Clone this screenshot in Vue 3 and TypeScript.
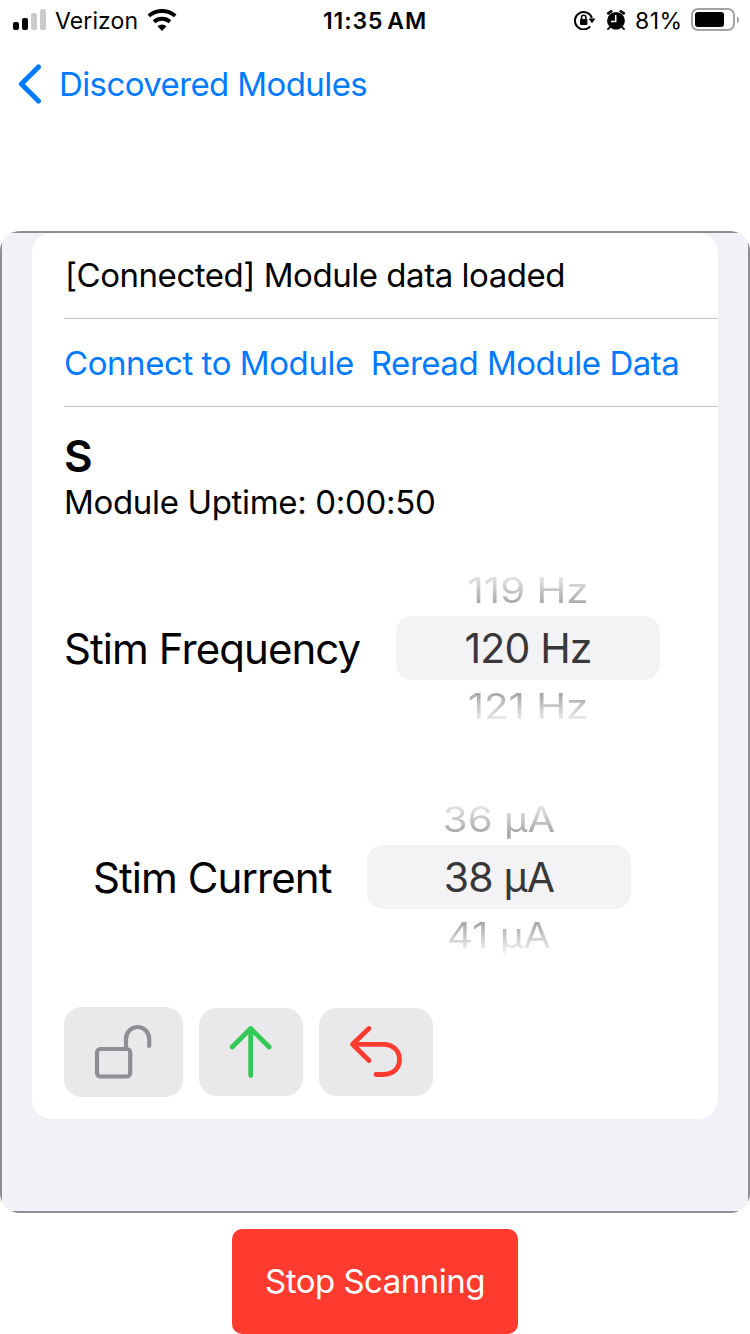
<script setup lang="ts">
interface Wheel {
  id: string
  label: string
  before: string
  value: string
  after: string
}

const wheels: Wheel[] = [
  { id: 'frequency', label: 'Stim Frequency', before: '119 Hz', value: '120 Hz', after: '121 Hz' },
  { id: 'current', label: 'Stim Current', before: '36 µA', value: '38 µA', after: '41 µA' },
]
</script>

<template>
  <div class="screen">
    <header class="status">
      <div class="side left">
        <svg class="signal" width="34" height="22" viewBox="0 0 34 22">
          <rect x="0" y="13" width="6" height="8" rx="2" />
          <rect x="9" y="9" width="6" height="12" rx="2" />
          <rect x="18" y="4" width="6" height="17" rx="2" fill="#cbcbcb" />
          <rect x="27" y="0" width="6" height="21" rx="2" fill="#cbcbcb" />
        </svg>
        <span class="carrier">Verizon</span>
        <svg class="wifi" width="30" height="22" viewBox="0 0 30 22">
          <path d="M1.800 6.900A20 20 0 0 1 28.200 6.900M7 12.800A12.200 12.200 0 0 1 23 12.800" fill="none" stroke="#000" stroke-width="3.900" />
          <path d="M15 22l-4.500-4.700a6.300 6.300 0 0 1 9 0z" />
        </svg>
      </div>
      <span class="time">11:35<i class="thin"></i>AM</span>
      <div class="side right">
        <svg class="rotation" width="22" height="20" viewBox="0 0 22 20">
          <path d="M16.200 16.400A8.700 8.700 0 1 1 17.900 8" fill="none" stroke="#000" stroke-width="2" />
          <path d="M14.500 8.400h7L18 13.200z" />
          <rect x="6" y="9" width="7.400" height="6" rx="1" />
          <path d="M7.500 9.500V7.400a2.200 2.200 0 0 1 4.400 0v2.100" fill="none" stroke="#000" stroke-width="1.600" />
        </svg>
        <svg class="alarm" width="20" height="20" viewBox="0 0 20 20">
          <circle cx="10" cy="10.800" r="8.900" />
          <path d="M2.200 3.300l3-2M17.800 3.300l-3-2" stroke="#000" stroke-width="2.600" stroke-linecap="round" />
          <path d="M4 17l-2 2.200M16 17l2 2.200" stroke="#000" stroke-width="1.800" stroke-linecap="round" />
          <path d="M9.700 5v6.400H5" fill="none" stroke="#fff" stroke-width="1.500" />
        </svg>
        <span class="percent">81%</span>
        <svg class="battery" width="49" height="24" viewBox="0 0 49 24">
          <rect x="1" y="1" width="42" height="21" rx="6" fill="none" stroke="#a3a3a3" stroke-width="2" />
          <rect x="4" y="4" width="29" height="15" rx="3" />
          <path d="M46 8.500c2.700 1.200 2.700 5.300 0 6.500z" fill="#a3a3a3" />
        </svg>
      </div>
    </header>

    <nav class="nav">
      <svg width="24" height="40" viewBox="0 0 24 40">
        <path d="M20.500 3L3.400 20l17.100 17" fill="none" stroke="#007aff" stroke-width="5" stroke-linecap="round" stroke-linejoin="round" />
      </svg>
      <span class="back">Discovered Modules</span>
    </nav>

    <main class="panel">
      <div class="frame">
        <section class="card">
          <div class="row status-row"><span class="message">[Connected] Module data loaded</span></div>
          <div class="row action-row">
            <a class="connect">Connect to Module</a>
            <a class="reread">Reread Module Data</a>
          </div>
          <div class="details">
            <h1>S</h1>
            <p class="uptime">Module Uptime: 0:00:50</p>
            <div v-for="w in wheels" :key="w.id" class="setting" :class="w.id">
              <span class="label">{{ w.label }}</span>
              <div class="wheel">
                <span class="near above">{{ w.before }}</span>
                <span class="current-value">{{ w.value }}</span>
                <span class="near below">{{ w.after }}</span>
              </div>
            </div>
            <div class="buttons">
              <button class="lock">
                <svg width="119" height="90" viewBox="0 0 119 90" fill="none" stroke="#8e8e93" stroke-width="4.200">
                  <rect x="33" y="42" width="33.200" height="27.500" rx="3.500" />
                  <path d="M62 42V32a11.600 12 0 0 1 23.200 0V39" stroke-linecap="round" />
                </svg>
              </button>
              <button class="upload">
                <svg width="104" height="88" viewBox="0 0 104 88" fill="none" stroke="#34c759" stroke-width="4.800" stroke-linecap="round" stroke-linejoin="round">
                  <path d="M51.700 67.500V20.500M33.200 39L51.700 20.500L70.200 39" />
                </svg>
              </button>
              <button class="undo">
                <svg width="114" height="88" viewBox="0 0 114 88" fill="none" stroke="#ff3b30" stroke-width="4.800" stroke-linecap="round" stroke-linejoin="round">
                  <path d="M50 20.500L33.500 36.300L50 52.500M33.500 36.300H64c11 0 16.500 7 16.500 15.200S75 66.500 64 66.500H57" />
                </svg>
              </button>
            </div>
          </div>
        </section>
      </div>
    </main>

    <button class="stop">Stop Scanning</button>
  </div>
</template>

<style>
body {
  background: #fff;
}
</style>

<style scoped>
.screen {
  width: 750px;
  height: 1334px;
  overflow: hidden;
  background: #fff;
  color: #000;
  font-family: Inter, "Liberation Sans", sans-serif;
  font-size: 33px;
  letter-spacing: -0.5px;
  display: flex;
  flex-direction: column;
  align-items: center;
  white-space: nowrap;
}
svg {
  display: block;
  flex: none;
}
button {
  border: 0;
  padding: 0;
  font: inherit;
  letter-spacing: inherit;
}
.status {
  width: 750px;
  height: 40px;
  display: grid;
  grid-template-columns: 300px 150px 300px;
  align-items: center;
  font-size: 23px;
  line-height: 38px;
}
.side {
  display: flex;
  align-items: center;
  height: 40px;
}
.carrier,
.time,
.percent {
  padding-top: 2px;
}
.left {
  padding-left: 13px;
}
.carrier {
  margin-left: 8px;
  width: 92px;
  letter-spacing: 0.1px;
}
.right {
  justify-content: flex-end;
  padding-right: 10px;
}
.time {
  text-align: center;
  font-weight: 600;
  letter-spacing: 0.9px;
}
.thin {
  display: inline-block;
  width: 4px;
}
.alarm {
  margin-left: 10px;
}
.percent {
  margin-left: 9px;
  width: 56px;
  letter-spacing: 0.5px;
}
.nav {
  width: 714px;
  height: 88px;
  padding: 0 18px;
  display: flex;
  align-items: center;
  color: #007aff;
}
.back {
  margin-left: 17px;
  letter-spacing: -0.6px;
}
.panel {
  margin-top: 103px;
  width: 750px;
  height: 982px;
  border-radius: 20px;
  overflow: hidden;
}
.frame {
  box-sizing: border-box;
  height: 982px;
  padding: 0 30px;
  border: 2px solid #8e8e93;
  background: #f2f1f7;
}
.card {
  height: 886px;
  border-radius: 20px;
  background: #fff;
  padding-left: 32px;
}
.row {
  display: flex;
  align-items: center;
  border-bottom: 1px solid #c6c6c8;
}
.status-row {
  height: 85px;
}
.message {
  padding: 0 0 2px 1px;
  letter-spacing: -0.46px;
}
.action-row {
  height: 87px;
  color: #007aff;
}
.connect {
  letter-spacing: -0.43px;
}
.reread {
  margin-left: 17px;
  letter-spacing: -0.48px;
}
h1 {
  margin: 0;
  padding-top: 22px;
  font-size: 44px;
  line-height: 54px;
  font-weight: 600;
}
.uptime {
  margin: -1px 0 0;
  line-height: 40px;
  letter-spacing: -0.33px;
}
.setting {
  display: flex;
  align-items: center;
  height: 180px;
}
.frequency {
  margin-top: 36px;
}
.current {
  margin-top: 49px;
  padding-left: 29px;
}
.label {
  font-size: 42px;
  width: 332px;
  letter-spacing: -0.93px;
}
.current .label {
  width: 274px;
}
.wheel {
  width: 264px;
  height: 180px;
  display: grid;
  grid-template-rows: 58px 64px 58px;
  text-align: center;
  font-size: 41px;
  line-height: 64px;
}
.current-value {
  background: #f3f3f5;
  border-radius: 16px;
  color: #38383a;
  letter-spacing: -0.85px;
}
.near {
  height: 64px;
  letter-spacing: 0;
}
.above {
  transform: scale(0.98, 0.85);
  mask-image: linear-gradient(rgb(0 0 0 / 0.1) 16px, rgb(0 0 0 / 0.34) 48px);
}
.below {
  margin-top: -6px;
  transform: scale(0.98, 0.85);
  mask-image: linear-gradient(rgb(0 0 0 / 0.36) 16px, rgb(0 0 0 / 0.1) 46px, rgb(0 0 0 / 0) 58px);
}
.buttons {
  margin-top: 40px;
  display: flex;
  align-items: center;
  gap: 16px;
}
.buttons button {
  background: #e9e9eb;
  border-radius: 18px;
}
.stop {
  margin-top: 16px;
  padding-bottom: 2px;
  width: 286px;
  height: 105px;
  border-radius: 10px;
  background: #ff3b30;
  color: #fff;
}
</style>
